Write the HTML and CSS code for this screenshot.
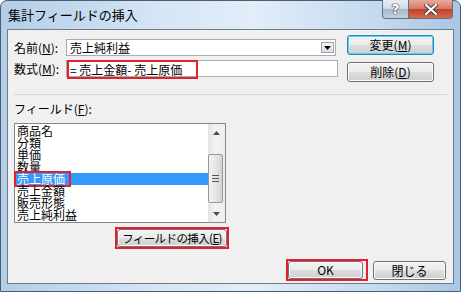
FILE: index.html
```html
<!DOCTYPE html>
<html lang="ja">
<head>
    <meta charset="UTF-8">
    <title>集計フィールドの挿入</title>
    <link rel="stylesheet" href="styles.css">
</head>
<body>
    <div class="window">
        <!-- タイトルバー -->
        <div class="titlebar">
            <span class="title">集計フィールドの挿入</span>
            <div class="caption-btns">
                <span class="cap-help">?</span>
                <span class="cap-close">
                    <svg width="14" height="11" viewBox="0 0 14 11">
                        <path d="M2 1 L12 10 M12 1 L2 10" stroke="#3a3a3a" stroke-width="4" stroke-linecap="square"/>
                        <path d="M2 1 L12 10 M12 1 L2 10" stroke="#fff" stroke-width="2.2" stroke-linecap="square"/>
                    </svg>
                </span>
            </div>
        </div>

        <div class="client">
            <div class="top">
                <div class="fields">
                    <label>名前(<u>N</u>):</label>
                    <div class="combo">
                        <span class="combo-text">売上純利益</span>
                        <span class="drop">
                            <svg width="7" height="4" viewBox="0 0 7 4"><path d="M0 0 H7 L3.5 4 Z" fill="#000"/></svg>
                        </span>
                    </div>
                    <label>数式(<u>M</u>):</label>
                    <div class="input">
                        <span class="mark-formula">= 売上金額- 売上原価</span>
                    </div>
                </div>
                <div class="side-btns">
                    <button class="btn default">変更(<u>M</u>)</button>
                    <button class="btn">削除(<u>D</u>)</button>
                </div>
            </div>

            <div class="sep"></div>

            <div class="field-label">フィールド(<u>F</u>):</div>

            <div class="listbox">
                <ul class="items">
                    <li>商品名</li>
                    <li>分類</li>
                    <li>単価</li>
                    <li>数量</li>
                    <li class="selected"><span class="mark-item">売上原価</span></li>
                    <li>売上金額</li>
                    <li>販売形態</li>
                    <li>売上純利益</li>
                </ul>
                <div class="vscroll">
                    <div class="arrow">
                        <svg width="7" height="4" viewBox="0 0 7 4"><path d="M0 4 H7 L3.5 0 Z" fill="#4d4d4d"/></svg>
                    </div>
                    <div class="track">
                        <div class="thumb"><span></span><span></span><span></span></div>
                    </div>
                    <div class="arrow">
                        <svg width="7" height="4" viewBox="0 0 7 4"><path d="M0 0 H7 L3.5 4 Z" fill="#4d4d4d"/></svg>
                    </div>
                </div>
            </div>

            <div class="insert-row">
                <span class="mark-btn">
                    <button class="btn insert">フィールドの挿入(<u>E</u>)</button>
                </span>
            </div>

            <div class="bottom-row">
                <span class="mark-btn ok-wrap">
                    <button class="btn ok">OK</button>
                </span>
                <button class="btn close">閉じる</button>
            </div>
        </div>
    </div>
</body>
</html>
```

FILE: styles.css
```css
body {
    margin: 0;
    font-family: "Noto Sans CJK JP", "DejaVu Sans", sans-serif;
    font-size: 12px;
    color: #000;
    background: #fff;
}

.window {
    width: 461px;
    height: 292px;
    box-sizing: border-box;
    border: 1px solid #4b5d73;
    border-radius: 7px 7px 0 0;
    background: linear-gradient(to right, #b3cde8 0%, #d6e6f5 35%, #e2edf8 55%, #c6dbef 80%, #aac6e4 100%);
    display: flex;
    flex-direction: column;
}

/* タイトルバー */
.titlebar {
    height: 28px;
    display: flex;
    justify-content: space-between;
    align-items: flex-start;
    padding: 0 7px 0 7px;
}

.title {
    font-size: 13px;
    line-height: 27px;
    color: #000;
}

.caption-btns {
    display: flex;
    margin-top: -1px;
}

.caption-btns span {
    height: 19px;
    display: flex;
    align-items: center;
    justify-content: center;
    border: 1px solid #5e6f82;
    border-top: none;
    box-sizing: border-box;
}

.cap-help {
    width: 27px;
    border-radius: 0 0 0 4px;
    background: linear-gradient(#e6edf4 0%, #d0dbe6 48%, #a9b9c9 52%, #c3d1de 100%);
    color: #fff;
    font-family: "DejaVu Sans", sans-serif;
    font-weight: bold;
    font-size: 14px;
    text-shadow: 0 0 1px #333, 0 0 1px #333, 0 0 1px #333;
}

.cap-close {
    width: 44px;
    border-left: none !important;
    border-radius: 0 0 4px 0;
    background: linear-gradient(#e8aa9c 0%, #d67a66 48%, #c0412a 52%, #d86b4e 100%);
}

/* クライアント領域 */
.client {
    flex: 1;
    margin: 0 6px 7px 6px;
    border: 1px solid #6f7b88;
    background-color: #f0f0f0;
}

.top {
    display: flex;
    align-items: flex-start;
    padding: 5px 0 0 6px;
}

.fields {
    display: grid;
    grid-template-columns: 52px 272px;
    row-gap: 4px;
    margin-top: 4px;
    align-items: center;
}

.fields label {
    line-height: 17px;
}

.combo {
    width: 270px;
    height: 17px;
    box-sizing: border-box;
    border: 1px solid #a5acb5;
    background: #fff;
    display: flex;
    align-items: center;
    justify-content: space-between;
}

.combo-text {
    padding-left: 3px;
    line-height: 15px;
}

.drop {
    width: 13px;
    height: 11px;
    margin-right: 1px;
    box-sizing: border-box;
    border: 1px solid #9aa3ad;
    background: linear-gradient(#f6f6f6, #dcdcdc);
    display: flex;
    align-items: center;
    justify-content: center;
}

.input {
    width: 272px;
    height: 17px;
    box-sizing: border-box;
    border: 1px solid #abadb3;
    background: #fff;
}

.mark-formula {
    display: inline-block;
    margin-top: -3px;
    height: 19px;
    box-sizing: border-box;
    width: 131px;
    border: 2px solid #e3202b;
    padding-left: 1px;
    line-height: 15px;
    white-space: nowrap;
}

.side-btns {
    display: flex;
    flex-direction: column;
    gap: 7px;
    margin-left: 9px;
}

.btn {
    font-family: "Noto Sans CJK JP", "DejaVu Sans", sans-serif;
    font-size: 12px;
    color: #000;
    height: 20px;
    padding: 0;
    line-height: 16px;
    white-space: nowrap;
    border: 1px solid #707070;
    border-radius: 3px;
    background: linear-gradient(#f2f2f2 0%, #ebebeb 48%, #dddddd 52%, #cfcfcf 100%);
    box-shadow: inset 0 0 0 1px #fcfcfc;
}

.side-btns .btn {
    width: 87px;
}

.btn.default {
    border-color: #3c7fb1;
    box-shadow: inset 0 0 0 1px #48d8fb;
}

.sep {
    height: 1px;
    margin: 12px 6px 0 6px;
    background-color: #cfd9e2;
}

.field-label {
    margin: 7px 0 0 6px;
    line-height: 14px;
}

/* リストボックス */
.listbox {
    display: flex;
    width: 212px;
    height: 100px;
    box-sizing: border-box;
    margin: 7px 0 0 6px;
    border: 1px solid #828790;
    background: #fff;
}

.items {
    list-style: none;
    margin: 0;
    padding: 1px 0 0 0;
    flex: 1;
}

.items li {
    height: 12px;
    line-height: 12px;
    padding-left: 2px;
    white-space: nowrap;
}

.items li.selected {
    background-color: #3399ff;
    color: #fff;
}

.mark-item {
    display: inline-block;
    height: 12px;
    margin-left: -1px;
    padding: 0 4px 0 1px;
    outline: 2px solid #e3202b;
}

.vscroll {
    width: 17px;
    display: flex;
    flex-direction: column;
    background: linear-gradient(to right, #e3e3e3, #f2f2f2 40%, #eeeeee);
}

.vscroll .arrow {
    height: 17px;
    display: flex;
    align-items: center;
    justify-content: center;
}

.track {
    flex: 1;
    padding-top: 13px;
}

.thumb {
    width: 15px;
    height: 49px;
    box-sizing: border-box;
    border: 1px solid #979797;
    border-radius: 2px;
    background: linear-gradient(to right, #f3f3f3, #e6e6e6 50%, #d4d4d4);
    display: flex;
    flex-direction: column;
    align-items: center;
    justify-content: center;
    gap: 2px;
}

.thumb span {
    width: 7px;
    height: 1px;
    background: #555;
}

.insert-row {
    margin: 4px 0 0 107px;
}

.mark-btn {
    display: inline-flex;
    border: 2px solid #e3202b;
}

.btn.insert {
    width: 110px;
    height: 18px;
    line-height: 14px;
    font-size: 11.5px;
    letter-spacing: -0.6px;
}

.bottom-row {
    display: flex;
    justify-content: flex-end;
    align-items: flex-start;
    gap: 5px;
    padding-right: 7px;
    margin-top: 10px;
}

.ok-wrap {
    padding-right: 3px;
}

.btn.ok {
    width: 75px;
    height: 18px;
    line-height: 14px;
}

.btn.close {
    width: 73px;
    height: 19px;
    margin-top: 2px;
    line-height: 15px;
}
```
